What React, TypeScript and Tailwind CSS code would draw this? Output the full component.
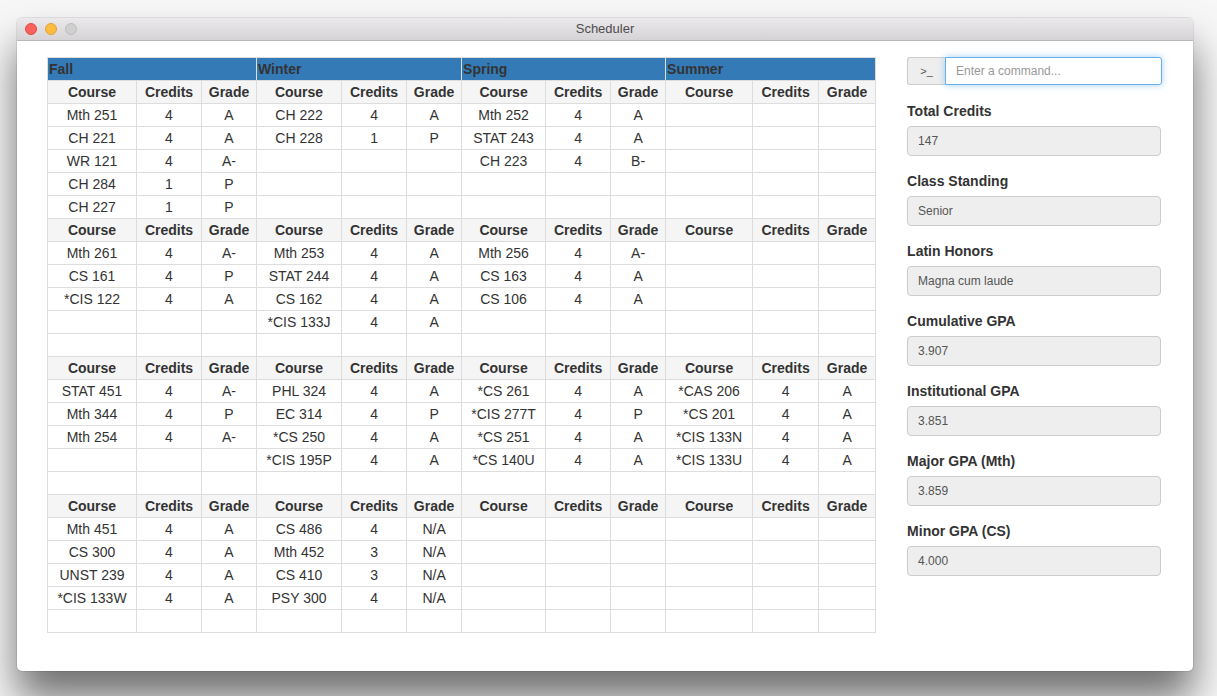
import React from "react";

type Course = [string, string, string];

const quarters = ["Fall", "Winter", "Spring", "Summer"];

const colWidths = [89, 65, 55, 85, 65, 55, 84, 65, 55, 87, 66, 57];

const years: Course[][][] = [
  [
    [
      ["Mth 251", "4", "A"],
      ["CH 221", "4", "A"],
      ["WR 121", "4", "A-"],
      ["CH 284", "1", "P"],
      ["CH 227", "1", "P"],
    ],
    [
      ["CH 222", "4", "A"],
      ["CH 228", "1", "P"],
    ],
    [
      ["Mth 252", "4", "A"],
      ["STAT 243", "4", "A"],
      ["CH 223", "4", "B-"],
    ],
    [],
  ],
  [
    [
      ["Mth 261", "4", "A-"],
      ["CS 161", "4", "P"],
      ["*CIS 122", "4", "A"],
    ],
    [
      ["Mth 253", "4", "A"],
      ["STAT 244", "4", "A"],
      ["CS 162", "4", "A"],
      ["*CIS 133J", "4", "A"],
    ],
    [
      ["Mth 256", "4", "A-"],
      ["CS 163", "4", "A"],
      ["CS 106", "4", "A"],
    ],
    [],
  ],
  [
    [
      ["STAT 451", "4", "A-"],
      ["Mth 344", "4", "P"],
      ["Mth 254", "4", "A-"],
    ],
    [
      ["PHL 324", "4", "A"],
      ["EC 314", "4", "P"],
      ["*CS 250", "4", "A"],
      ["*CIS 195P", "4", "A"],
    ],
    [
      ["*CS 261", "4", "A"],
      ["*CIS 277T", "4", "P"],
      ["*CS 251", "4", "A"],
      ["*CS 140U", "4", "A"],
    ],
    [
      ["*CAS 206", "4", "A"],
      ["*CS 201", "4", "A"],
      ["*CIS 133N", "4", "A"],
      ["*CIS 133U", "4", "A"],
    ],
  ],
  [
    [
      ["Mth 451", "4", "A"],
      ["CS 300", "4", "A"],
      ["UNST 239", "4", "A"],
      ["*CIS 133W", "4", "A"],
    ],
    [
      ["CS 486", "4", "N/A"],
      ["Mth 452", "3", "N/A"],
      ["CS 410", "3", "N/A"],
      ["PSY 300", "4", "N/A"],
    ],
    [],
    [],
  ],
];

const stats = [
  ["Total Credits", "147"],
  ["Class Standing", "Senior"],
  ["Latin Honors", "Magna cum laude"],
  ["Cumulative GPA", "3.907"],
  ["Institutional GPA", "3.851"],
  ["Major GPA (Mth)", "3.859"],
  ["Minor GPA (CS)", "4.000"],
];

const ROWS = 5;

function ScheduleTable() {
  return (
    <table className="table-fixed border-collapse w-[828px] text-[14px] text-[#333]">
      <colgroup>
        {colWidths.map((w, i) => (
          <col key={i} style={{ width: w }} />
        ))}
      </colgroup>
      <thead>
        <tr>
          {quarters.map((q) => (
            <th
              key={q}
              colSpan={3}
              className="h-[23px] bg-[#337ab7] border border-[#ddd] px-[1px] text-left font-bold leading-none"
            >
              {q}
            </th>
          ))}
        </tr>
      </thead>
      <tbody>
        {years.map((year, y) => (
          <React.Fragment key={y}>
            <tr>
              {quarters.map((q) =>
                ["Course", "Credits", "Grade"].map((h) => (
                  <td
                    key={q + h}
                    className="h-[23px] p-0 border border-[#ddd] bg-[#f5f5f5] text-center font-bold leading-none"
                  >
                    {h}
                  </td>
                ))
              )}
            </tr>
            {[...Array(ROWS)].map((_, r) => (
              <tr key={r}>
                {year.map((qc, qi) =>
                  [0, 1, 2].map((c) => (
                    <td
                      key={qi + "-" + c}
                      className="h-[23px] p-0 border border-[#ddd] text-center leading-none whitespace-nowrap"
                    >
                      {qc[r] ? qc[r][c] : ""}
                    </td>
                  ))
                )}
              </tr>
            ))}
          </React.Fragment>
        ))}
      </tbody>
    </table>
  );
}

function SidePanel() {
  return (
    <div className="w-[255px] flex flex-col">
      {/* command line */}
      <div className="flex h-[28px] w-[255px]">
        <span className="w-[38px] flex items-center justify-center bg-[#eee] border border-[#ccc] border-r-0 rounded-l-[3px] text-[11px] text-[#555]">
          &gt;_
        </span>
        <input
          placeholder="Enter a command..."
          className="flex-1 min-w-0 px-[10px] bg-white border border-[#66afe9] rounded-r-[3px] text-[12px] text-[#555] placeholder:text-[#999] outline-none shadow-[0_0_7px_rgba(102,175,233,0.6)]"
        />
      </div>
      <div className="pt-[1px] flex flex-col">
        {stats.map(([label, value]) => (
          <div key={label} className="mt-[15px] flex flex-col">
            <label className="text-[14px] font-bold text-[#333] leading-[20px] mb-[5px]">{label}</label>
            <div className="h-[30px] w-[254px] flex items-center px-[10px] bg-[#eee] border border-[#ccc] rounded-[4px] text-[12px] text-[#555]">
              {value}
            </div>
          </div>
        ))}
      </div>
    </div>
  );
}

export default function App() {
  return (
    <div
      className="w-[1217px] h-[696px] overflow-hidden bg-[#f7f7f7] pt-[18px] pl-[17px]"
      style={{ fontFamily: '"Liberation Sans", Arial, sans-serif' }}
    >
      <div className="w-[1176px] h-[653px] bg-white rounded-[5px] shadow-[0_28px_40px_rgba(0,0,0,0.55),0_0_0_1px_rgba(0,0,0,0.08)] flex flex-col overflow-hidden">
        {/* title bar */}
        <div className="relative h-[23px] flex items-center justify-center bg-gradient-to-b from-[#ebe9eb] to-[#d5d3d5] border-b border-[#b9b9b9]">
          <div className="absolute left-[8px] top-[5px] flex gap-[8px]">
            <span className="w-[12px] h-[12px] rounded-full bg-[#fc605c] border border-[#de4a45]" />
            <span className="w-[12px] h-[12px] rounded-full bg-[#fdbc40] border border-[#dea236]" />
            <span className="w-[12px] h-[12px] rounded-full bg-[#d0cfd0] border border-[#bdbcbd]" />
          </div>
          <span className="text-[13px] text-[#4d4d4d]">Scheduler</span>
        </div>
        <div className="flex pt-[16px] pl-[30px] gap-[31px]">
          <ScheduleTable />
          <SidePanel />
        </div>
      </div>
    </div>
  );
}
